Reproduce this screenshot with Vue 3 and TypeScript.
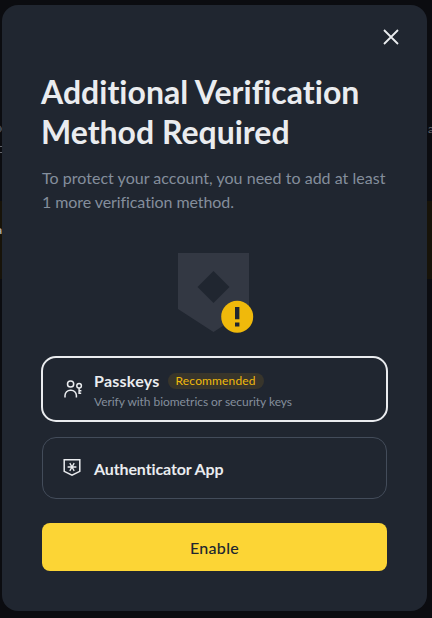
<script setup lang="ts">
import { ref } from 'vue'

const selected = ref<'passkeys' | 'app'>('passkeys')
</script>

<template>
  <div class="overlay">
    <div class="band"></div>
    <span class="peek peek-avatar"></span>
    <span class="peek peek-line"></span>
    <span class="peek peek-line second"></span>
    <span class="peek peek-left">a</span>
    <span class="peek peek-right">a</span>
    <section class="modal" role="dialog">
      <header class="top">
        <button class="close" aria-label="Close">
          <svg width="16" height="16" viewBox="0 0 16 16"><path d="M1 1l14 14M15 1L1 15" fill="none" stroke="#eaecef" stroke-width="1.8" /></svg>
        </button>
      </header>
      <h1><span class="t1">Additional Verification</span><br /><span class="t2">Method Required</span></h1>
      <p class="lead"><span class="l1">To protect your account, you need to add at least</span><br /><span class="l2">1 more verification method.</span></p>
      <div class="art">
        <svg width="76" height="81" viewBox="0 0 76 81">
          <path d="M0 0h71v56L35.5 79 0 56z" fill="#333843" />
          <path d="M35.5 18L51.5 34 35.5 50 19.5 34z" fill="#202630" />
          <circle cx="59.2" cy="63.8" r="16" fill="#f0b90b" />
          <path d="M57 54h4.4v12.2H57zM57 69.6h4.4v4H57z" fill="#202630" />
        </svg>
      </div>
      <div class="option" :class="{ selected: selected === 'passkeys' }" @click="selected = 'passkeys'">
        <svg class="icon" width="20" height="20" viewBox="0 0 20 20" fill="none" stroke="#eaecef" stroke-width="1.5">
          <circle cx="7.6" cy="5" r="3.1" />
          <path d="M2 18.5v-2.1a5.3 5.3 0 0 1 5.3-5.2h.8a5.3 5.3 0 0 1 5.3 5.2v2.1" />
          <circle cx="16.1" cy="6.7" r="2.3" />
          <path d="M16.1 9v6M16 11.7h2.4M16 14.2h2.2" />
        </svg>
        <div class="copy">
          <div class="row"><span class="name n1">Passkeys</span><span class="tag">Recommended</span></div>
          <div class="sub">Verify with biometrics or security keys</div>
        </div>
      </div>
      <div class="option second-option" :class="{ selected: selected === 'app' }" @click="selected = 'app'">
        <svg class="icon shield" width="20" height="20" viewBox="0 0 20 20" fill="none" stroke="#eaecef" stroke-width="1.5">
          <path d="M1.2 1.7h15.6v11.6L9 17.2 1.2 13.3z" />
          <path d="M4.6 9h8.8M6.8 5.2L11.2 12.8M11.2 5.2L6.8 12.8" stroke-width="1.3" />
        </svg>
        <span class="name n2">Authenticator App</span>
      </div>
      <button class="enable">Enable</button>
    </section>
  </div>
</template>

<style>
body { background: #0c0d10; }
</style>

<style scoped>
.overlay {
  position: relative;
  box-sizing: border-box;
  width: 432px;
  height: 618px;
  padding: 5px 5px 7px 2px;
  overflow: hidden;
  background: #0b0c10;
  font-family: Lato, "Liberation Sans", sans-serif;
  font-variant-ligatures: none;
}
.band { position: absolute; left: 0; right: 0; top: 201px; height: 78px; background: #171309; }
.peek { position: absolute; color: #777980; font-size: 12px; line-height: 14px; }
.peek-avatar { left: -6px; top: 125px; width: 6px; height: 6px; border: 1px solid #5a4537; border-radius: 50%; background: #214b6a; }
.peek-line { left: 0; top: 146px; width: 2px; height: 1px; background: #64666c; }
.peek-line.second { top: 152px; }
.peek-left { left: -4px; top: 223px; font-weight: 700; color: #aaa; }
.peek-right { left: 428px; top: 122px; color: #62656b; }
.modal {
  position: relative;
  box-sizing: border-box;
  display: flex;
  flex-direction: column;
  width: 425px;
  height: 606px;
  padding: 24px 40px 40px;
  border-radius: 16px;
  background: #202630;
}
.top { display: flex; flex: none; justify-content: flex-end; height: 43px; margin-right: -12px; }
.close { display: flex; width: 16px; height: 16px; padding: 0; border: 0; background: none; }
h1 { margin: 0 0 0 -1px; font-size: 32px; line-height: 40px; font-weight: 700; color: #eaecef; white-space: nowrap; }
.t1 { letter-spacing: 0.02px; }
.t2 { letter-spacing: 0; }
.lead { margin: 14px 0 0; font-size: 16px; line-height: 24px; color: #848e9c; white-space: nowrap; }
.l1 { letter-spacing: 0.03px; }
.l2 { letter-spacing: -0.08px; }
.art { display: flex; flex: none; height: 81px; margin: 39px 0 23px; padding-left: 136px; }
.option {
  box-sizing: border-box;
  display: flex;
  align-items: center;
  height: 62px;
  flex: none;
  padding-left: 20px;
  border: 1px solid #434c5a;
  border-radius: 14px;
}
.option.selected { height: 66px; margin: -1px; border: 2px solid #eaecef; border-radius: 15px; }
.icon { flex: none; margin-right: 11px; }
.shield { margin-top: -1px; }
.second-option { margin-top: 16px; }
.copy { display: flex; flex-direction: column; padding-top: 4px; }
.row { display: flex; align-items: center; height: 22px; }
.name { font-size: 16px; line-height: 22px; font-weight: 700; color: #eaecef; }
.n1 { margin-top: -2px; letter-spacing: 0.25px; }
.n2 { margin-top: 2px; letter-spacing: -0.12px; }
.tag { display: flex; align-items: center; box-sizing: border-box; width: 96px; height: 16px; margin: -3px 0 0 8px; padding: 0 8px; border-radius: 8px; background: #38352b; color: #f0b90b; font-size: 12px; letter-spacing: 0.15px; }
.sub { height: 18px; font-size: 12px; line-height: 18px; color: #848e9c; letter-spacing: -0.05px; }
.enable { height: 48px; flex: none; margin: 24px 0 0; padding: 0; border: 0; border-radius: 8px; background: #fcd535; color: #202630; font-family: inherit; font-size: 16px; font-weight: 500; letter-spacing: 0.3px; }
</style>
